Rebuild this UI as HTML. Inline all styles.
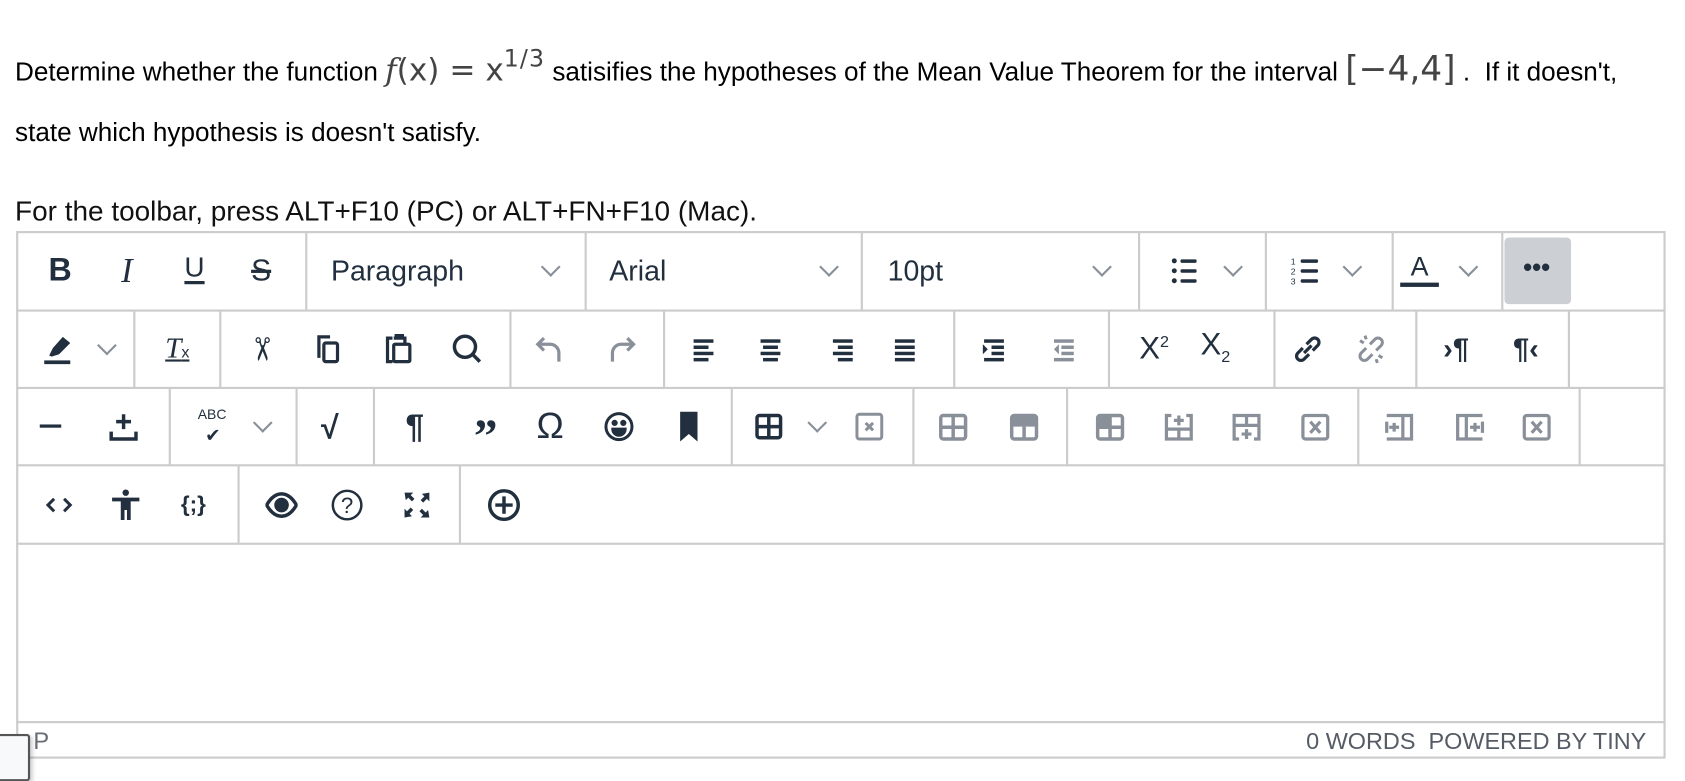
<!DOCTYPE html>
<html><head><meta charset="utf-8"><style>
html,body{margin:0;padding:0;background:#fff;overflow:hidden;width:1685px;height:768px}
#w{position:absolute;left:0;top:0;width:1568px;height:714px;transform:scale(1.0746);transform-origin:0 0;font-family:"Liberation Sans",Arial,sans-serif;color:#000}
.a{position:absolute}
.t{position:absolute;font-size:24.3px;white-space:nowrap}
.m{font-family:"DejaVu Sans","Liberation Sans",sans-serif;color:#444}
.hl{position:absolute;height:2px;background:#ccc}
.vl{position:absolute;width:2px;background:#ccc}
.i{position:absolute;width:30px;height:30px;margin:-15px 0 0 -15px}
.i svg{width:30px;height:30px;display:block}
.g{position:absolute;font-size:26px;color:#222f3e;transform:translate(-50%,-50%);white-space:nowrap}
.ch{position:absolute;width:11px;height:11px;margin:-10px 0 0 -6px;border-right:2px solid #8a9099;border-bottom:2px solid #8a9099;transform:rotate(45deg)}
</style></head><body><div id="w">

<div class="t" style="left:14px;top:45px">Determine whether the function <span class="m" style="font-size:29px;font-style:italic;font-family:'DejaVu Serif',serif">f</span><span class="m" style="font-size:29px">(x) = x</span><sup class="m" style="font-size:22px;position:relative;top:-4px;letter-spacing:1px">1/3</sup> satisifies the hypotheses of the Mean Value Theorem for the interval <span class="m" style="font-size:32px">[−4,4]</span> .&nbsp; If it doesn't,</div>
<div class="t" style="left:14px;top:110px">state which hypothesis is doesn't satisfy.</div>
<div class="t" style="left:14px;top:181px;font-size:26px;color:#111">For the toolbar, press ALT+F10 (PC) or ALT+FN+F10 (Mac).</div>

<!-- frame -->
<div class="a" style="left:15px;top:215px;width:1535px;height:491px;border:2px solid #ccc;box-sizing:border-box"></div>
<div class="hl" style="left:15px;top:288px;width:1535px"></div>
<div class="hl" style="left:15px;top:360px;width:1535px"></div>
<div class="hl" style="left:15px;top:432px;width:1535px"></div>
<div class="hl" style="left:15px;top:505px;width:1535px"></div>
<div class="hl" style="left:15px;top:671px;width:1535px"></div>
<div class="vl" style="left:284px;top:215px;height:74px"></div>
<div class="vl" style="left:544px;top:215px;height:74px"></div>
<div class="vl" style="left:801px;top:215px;height:74px"></div>
<div class="vl" style="left:1059px;top:215px;height:74px"></div>
<div class="vl" style="left:1177px;top:215px;height:74px"></div>
<div class="vl" style="left:1295px;top:215px;height:74px"></div>
<div class="vl" style="left:1397px;top:215px;height:74px"></div>
<div class="vl" style="left:124px;top:289px;height:72px"></div>
<div class="vl" style="left:204px;top:289px;height:72px"></div>
<div class="vl" style="left:474px;top:289px;height:72px"></div>
<div class="vl" style="left:617px;top:289px;height:72px"></div>
<div class="vl" style="left:887px;top:289px;height:72px"></div>
<div class="vl" style="left:1031px;top:289px;height:72px"></div>
<div class="vl" style="left:1185px;top:289px;height:72px"></div>
<div class="vl" style="left:1317px;top:289px;height:72px"></div>
<div class="vl" style="left:1459px;top:289px;height:72px"></div>
<div class="vl" style="left:157px;top:361px;height:72px"></div>
<div class="vl" style="left:275px;top:361px;height:72px"></div>
<div class="vl" style="left:347px;top:361px;height:72px"></div>
<div class="vl" style="left:680px;top:361px;height:72px"></div>
<div class="vl" style="left:849px;top:361px;height:72px"></div>
<div class="vl" style="left:992px;top:361px;height:72px"></div>
<div class="vl" style="left:1263px;top:361px;height:72px"></div>
<div class="vl" style="left:1469px;top:361px;height:72px"></div>
<div class="vl" style="left:221px;top:433px;height:73px"></div>
<div class="vl" style="left:427px;top:433px;height:73px"></div>

<!-- row1 -->
<div class="g" style="left:56px;top:252px;font-weight:bold;font-size:30px">B</div>
<div class="g" style="left:118px;top:252px;font-style:italic;font-size:32px;font-family:'Liberation Serif',serif">I</div>
<div class="g" style="left:181px;top:249px;font-size:26px;text-decoration:underline;text-underline-offset:4px;text-decoration-thickness:3px">U</div>
<div class="g" style="left:243px;top:252px;font-size:28px;text-decoration:line-through;text-decoration-thickness:2.5px">S</div>
<div class="t" style="left:308px;top:237px;font-size:26.5px;color:#222f3e">Paragraph</div><div class="ch" style="left:512px;top:252px"></div>
<div class="t" style="left:567px;top:237px;font-size:26.5px;color:#222f3e">Arial</div><div class="ch" style="left:771px;top:252px"></div>
<div class="t" style="left:826px;top:237px;font-size:26.5px;color:#222f3e">10pt</div><div class="ch" style="left:1025px;top:252px"></div>
<div class="i" style="left:1102px;top:252px"><svg viewBox="0 0 26 26" fill="#222f3e"><circle cx="5" cy="5" r="2"/><circle cx="5" cy="13" r="2"/><circle cx="5" cy="21" r="2"/><rect x="10" y="3.8" width="13" height="2.8" rx="1"/><rect x="10" y="11.8" width="13" height="2.8" rx="1"/><rect x="10" y="19.8" width="13" height="2.8" rx="1"/></svg></div><div class="ch" style="left:1147px;top:252px"></div>
<div class="i" style="left:1215px;top:252px"><svg viewBox="0 0 26 26" fill="#222f3e"><text x="1" y="8" font-size="7" font-family="Liberation Sans">1</text><text x="1" y="16" font-size="7" font-family="Liberation Sans">2</text><text x="1" y="24" font-size="7" font-family="Liberation Sans">3</text><rect x="9" y="3.8" width="14" height="2.8" rx="1"/><rect x="9" y="11.8" width="14" height="2.8" rx="1"/><rect x="9" y="19.8" width="14" height="2.8" rx="1"/></svg></div><div class="ch" style="left:1258px;top:252px"></div>
<div class="g" style="left:1321px;top:249px;font-size:25px">A</div><div class="a" style="left:1303px;top:263px;width:36px;height:4px;background:#222f3e"></div><div class="ch" style="left:1366px;top:252px"></div>
<div class="a" style="left:1400px;top:221px;width:62px;height:62px;background:#cccfd3;border-radius:4px"></div>
<div class="g" style="left:1430px;top:250px;font-size:24px;font-weight:bold;letter-spacing:0px">•••</div>

<!-- row2 -->
<div class="i" style="left:55px;top:325px"><svg viewBox="0 0 26 26" fill="#222f3e"><path d="M5 18l3-6 8-9 6 5-9 9-6 2z"/><rect x="1" y="22" width="21" height="3"/></svg></div><div class="ch" style="left:99px;top:325px"></div>
<div class="g" style="left:165px;top:324px;font-style:italic;font-size:27px;font-family:'Liberation Serif',serif;text-decoration:underline">T<span style="font-size:15px;font-style:normal;font-family:'Liberation Sans'">x</span></div>
<div class="g" style="left:243px;top:325px;font-size:30px;transform:translate(-50%,-50%) rotate(90deg)">✂</div>
<div class="i" style="left:306px;top:325px"><svg viewBox="0 0 26 26" fill="none" stroke="#222f3e" stroke-width="2.6"><path d="M5 20V3h9"/><rect x="9" y="8" width="11" height="15" rx="1.5"/></svg></div>
<div class="i" style="left:371px;top:325px"><svg viewBox="0 0 26 26" fill="none" stroke="#222f3e" stroke-width="2.6"><path d="M8 4H4v19h4"/><rect x="9" y="9" width="13" height="14" rx="1"/><path d="M9 4h9v5M11 4V2h5v2"/></svg></div>
<div class="i" style="left:435px;top:325px"><svg viewBox="0 0 26 26" fill="none" stroke="#222f3e" stroke-width="2.8"><circle cx="11" cy="11" r="8.5"/><path d="M17 17l6 6"/></svg></div>
<div class="i" style="left:512px;top:325px"><svg viewBox="0 0 26 26" fill="none" stroke="#8a9099" stroke-width="2.6"><path d="M8 4L3 9l5 5M3 9h10a7 7 0 0 1 7 7v7"/></svg></div>
<div class="i" style="left:578px;top:325px"><svg viewBox="0 0 26 26" fill="none" stroke="#8a9099" stroke-width="2.6"><path d="M18 4l5 5-5 5M23 9H13a7 7 0 0 0-7 7v7"/></svg></div>
<div class="i" style="left:657px;top:325px"><svg viewBox="0 0 26 26" fill="#222f3e"><rect x="3" y="5" width="16" height="2.8"/><rect x="3" y="10" width="12" height="2.8"/><rect x="3" y="15" width="16" height="2.8"/><rect x="3" y="20" width="12" height="2.8"/></svg></div>
<div class="i" style="left:717px;top:325px"><svg viewBox="0 0 26 26" fill="#222f3e"><rect x="5" y="5" width="16" height="2.8"/><rect x="7" y="10" width="12" height="2.8"/><rect x="5" y="15" width="16" height="2.8"/><rect x="7" y="20" width="12" height="2.8"/></svg></div>
<div class="i" style="left:782px;top:325px"><svg viewBox="0 0 26 26" fill="#222f3e"><rect x="7" y="5" width="16" height="2.8"/><rect x="11" y="10" width="12" height="2.8"/><rect x="7" y="15" width="16" height="2.8"/><rect x="11" y="20" width="12" height="2.8"/></svg></div>
<div class="i" style="left:842px;top:325px"><svg viewBox="0 0 26 26" fill="#222f3e"><rect x="5" y="5" width="16" height="2.8"/><rect x="5" y="10" width="16" height="2.8"/><rect x="5" y="15" width="16" height="2.8"/><rect x="5" y="20" width="16" height="2.8"/></svg></div>
<div class="i" style="left:925px;top:325px"><svg viewBox="0 0 26 26" fill="#222f3e"><rect x="5" y="5" width="16" height="2.8"/><rect x="11" y="10" width="10" height="2.8"/><rect x="11" y="15" width="10" height="2.8"/><rect x="5" y="20" width="16" height="2.8"/><path d="M4 9l4 4-4 4z"/></svg></div>
<div class="i" style="left:990px;top:325px"><svg viewBox="0 0 26 26" fill="#8a9099"><rect x="5" y="5" width="16" height="2.8"/><rect x="11" y="10" width="10" height="2.8"/><rect x="11" y="15" width="10" height="2.8"/><rect x="5" y="20" width="16" height="2.8"/><path d="M9 9l-4 4 4 4z"/></svg></div>
<div class="g" style="left:1074px;top:325px;font-size:29px">X<sup style="font-size:15px">2</sup></div>
<div class="g" style="left:1131px;top:323px;font-size:29px">X<sub style="font-size:15px">2</sub></div>
<div class="i" style="left:1217px;top:325px"><svg viewBox="0 0 26 26" fill="none" stroke="#222f3e" stroke-width="2.6"><path d="M10 16l6-6M9 12l-4 4a3 3 0 0 0 5 5l4-4M17 14l4-4a3 3 0 0 0-5-5l-4 4"/></svg></div>
<div class="i" style="left:1276px;top:325px"><svg viewBox="0 0 26 26" fill="none" stroke="#8a9099" stroke-width="2.4"><path d="M9 12l-4 4a3 3 0 0 0 5 5l4-4M17 14l4-4a3 3 0 0 0-5-5l-4 4M4 6l3 2M8 2l1 3M22 20l-3-2M18 24l-1-3"/></svg></div>
<div class="g" style="left:1355px;top:325px;font-size:27px;font-weight:bold">›¶</div>
<div class="g" style="left:1420px;top:325px;font-size:27px;font-weight:bold">¶‹</div>

<!-- row3 -->
<div class="a" style="left:37px;top:395px;width:20px;height:3px;background:#222f3e"></div>
<div class="i" style="left:115px;top:397px"><svg viewBox="0 0 26 26" fill="none" stroke="#222f3e" stroke-width="2.8"><path d="M13 3v12M7 9h12M3 17v6h20v-6"/></svg></div>
<div class="t" style="left:184px;top:378px;font-size:13px;color:#222f3e">ABC</div>
<div class="g" style="left:198px;top:406px;font-size:17px">✔</div><div class="ch" style="left:244px;top:397px"></div>
<div class="g" style="left:307px;top:399px;font-size:30px;font-weight:bold">√</div>
<div class="g" style="left:386px;top:397px;font-size:31px;font-weight:bold">¶</div>
<div class="g" style="left:452px;top:406px;font-size:44px;font-weight:bold;font-family:'Liberation Serif',serif">”</div>
<div class="g" style="left:512px;top:397px;font-size:34px">Ω</div>
<div class="i" style="left:576px;top:397px"><svg viewBox="0 0 26 26" fill="none" stroke="#222f3e" stroke-width="2.4"><circle cx="13" cy="13" r="10.5"/><circle cx="9.5" cy="10" r="1.3" fill="#222f3e"/><circle cx="16.5" cy="10" r="1.3" fill="#222f3e"/><path d="M8 15h10a5 5 0 0 1-10 0z" fill="#222f3e"/></svg></div>
<div class="i" style="left:641px;top:397px"><svg viewBox="0 0 26 26" fill="#222f3e"><path d="M6 1h14v24l-7-6-7 6z"/></svg></div>
<div class="i" style="left:716px;top:397px"><svg viewBox="0 0 26 26" fill="none" stroke="#222f3e" stroke-width="2.8"><rect x="3" y="4" width="19" height="18" rx="2"/><path d="M12.5 4v18M3 13h19"/></svg></div><div class="ch" style="left:760px;top:397px"></div>
<div class="i" style="left:809px;top:397px"><svg viewBox="0 0 26 26" fill="none" stroke="#8a9099" stroke-width="2.4"><rect x="3" y="3" width="20" height="20" rx="2"/><path d="M10 10l6 6M16 10l-6 6"/></svg></div>
<div class="i" style="left:887px;top:397px"><svg viewBox="0 0 26 26" fill="none" stroke="#8a9099" stroke-width="2.8"><rect x="3" y="4" width="20" height="19" rx="2"/><path d="M13 4v19M3 13.5h20"/></svg></div>
<div class="i" style="left:953px;top:397px"><svg viewBox="0 0 26 26" fill="#8a9099"><path d="M3 4h20v9H3z"/><rect x="3" y="4" width="20" height="19" rx="2" fill="none" stroke="#8a9099" stroke-width="2.8"/><path d="M13 13v10" stroke="#8a9099" stroke-width="2.8"/></svg></div>
<div class="i" style="left:1033px;top:397px"><svg viewBox="0 0 26 26" fill="#8a9099"><path d="M3 4h10v9H3z"/><rect x="3" y="4" width="20" height="19" rx="2" fill="none" stroke="#8a9099" stroke-width="2.8"/><path d="M13 4v19M3 13.5h20" stroke="#8a9099" stroke-width="2.8"/></svg></div>
<div class="i" style="left:1097px;top:397px"><svg viewBox="0 0 26 26" fill="none" stroke="#8a9099" stroke-width="2.6"><path d="M7 4H3v19h20V4h-4M3 15h20M13 15v8M13 4v8M9 8h8"/></svg></div>
<div class="i" style="left:1160px;top:397px"><svg viewBox="0 0 26 26" fill="none" stroke="#8a9099" stroke-width="2.6"><path d="M7 23H3V4h20v19h-4M3 12h20M13 4v8M13 15v8M9 19h8"/></svg></div>
<div class="i" style="left:1224px;top:397px"><svg viewBox="0 0 26 26" fill="none" stroke="#8a9099" stroke-width="2.6"><rect x="3" y="4" width="20" height="19" rx="2"/><path d="M9 9l8 9M17 9l-8 9"/></svg></div>
<div class="i" style="left:1302px;top:397px"><svg viewBox="0 0 26 26" fill="none" stroke="#8a9099" stroke-width="2.6"><path d="M3 4h20v19H3M16 4v19M3 9v9M5 13.5h8M9 10v7"/></svg></div>
<div class="i" style="left:1368px;top:397px"><svg viewBox="0 0 26 26" fill="none" stroke="#8a9099" stroke-width="2.6"><path d="M23 4H3v19h20M10 4v19M23 9v9M13 13.5h8M17 10v7"/></svg></div>
<div class="i" style="left:1430px;top:397px"><svg viewBox="0 0 26 26" fill="none" stroke="#8a9099" stroke-width="2.6"><rect x="3" y="4" width="20" height="19" rx="2"/><path d="M9 9l8 9M17 9l-8 9"/></svg></div>

<!-- row4 -->
<div class="i" style="left:55px;top:470px"><svg viewBox="0 0 26 26" fill="none" stroke="#222f3e" stroke-width="2.4"><path d="M9 8l-5 5 5 5M17 8l5 5-5 5"/></svg></div>
<div class="i" style="left:117px;top:470px"><svg viewBox="0 0 26 26" fill="#222f3e"><circle cx="13" cy="3" r="2.6"/><path d="M2 7h22v3h-7v15h-3v-8h-2v8H9V10H2z"/></svg></div>
<div class="g" style="left:180px;top:470px;font-size:21px;font-weight:bold">{;}</div>
<div class="i" style="left:262px;top:470px"><svg viewBox="0 0 26 26" fill="none" stroke="#222f3e" stroke-width="2.8"><path d="M1 13c4-7 8-9 12-9s8 2 12 9c-4 7-8 9-12 9s-8-2-12-9z"/><circle cx="13" cy="13" r="4.5" fill="#222f3e"/></svg></div>
<div class="i" style="left:323px;top:470px"><svg viewBox="0 0 26 26" fill="none" stroke="#222f3e" stroke-width="2"><circle cx="13" cy="13" r="11.5"/><text x="13" y="19.5" font-size="18" text-anchor="middle" fill="#222f3e" stroke="none" font-family="Liberation Sans">?</text></svg></div>
<div class="i" style="left:388px;top:470px"><svg viewBox="0 0 26 26" fill="#222f3e"><path d="M3 3h7l-2 2 3 3-2 2-3-3-2 2zM23 3v7l-2-2-3 3-2-2 3-3-2-2zM3 23v-7l2 2 3-3 2 2-3 3 2 2zM23 23h-7l2-2-3-3 2-2 3 3 2-2z"/></svg></div>
<div class="i" style="left:469px;top:470px"><svg viewBox="0 0 26 26" fill="none" stroke="#222f3e" stroke-width="2.8"><circle cx="13" cy="13" r="11.5"/><path d="M13 6v14M6 13h14"/></svg></div>

<!-- status -->
<div class="t" style="left:31px;top:677px;font-size:22px;color:#666d75">P</div>
<div class="t" style="right:36px;top:677px;font-size:21.8px;color:#555c66">0 WORDS&nbsp; POWERED BY TINY</div>
<div class="a" style="left:-6px;top:683px;width:30px;height:40px;border:2px solid #555;border-radius:3px;background:#f7f9fb;box-shadow:2px 2px 4px rgba(0,0,0,.2)"></div>
</div></body></html>
